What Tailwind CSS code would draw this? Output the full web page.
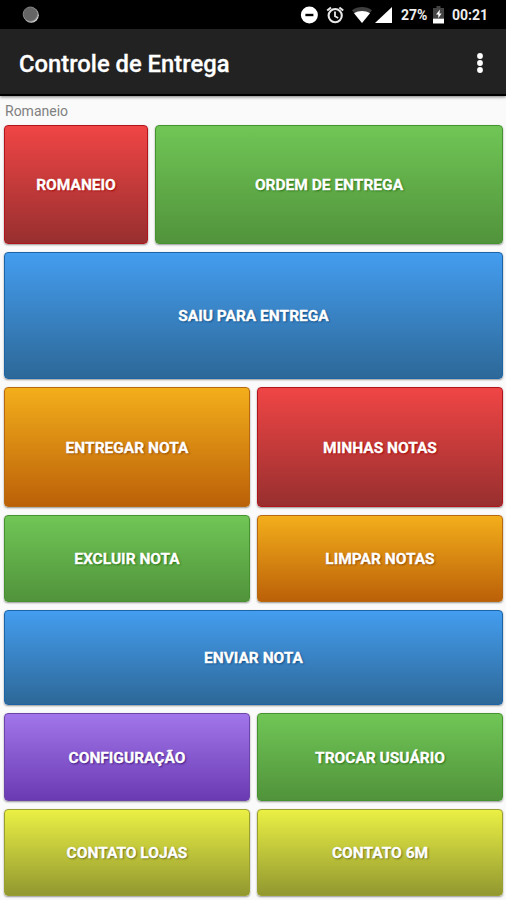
<!DOCTYPE html>
<html lang="pt-BR">
<head>
  <meta charset="UTF-8">
  <meta name="viewport" content="width=device-width, initial-scale=1.0">
  <title>Controle de Entrega</title>
  <script src="https://cdn.jsdelivr.net/npm/@tailwindcss/browser@4"></script>
  <style>
    .btn {
      border-width: 1px;
      border-radius: 4px;
      padding-top: 3px;
      color: #fff;
      font-weight: 700;
      font-size: 15.5px;
      -webkit-text-stroke: 0.3px #fff;
      white-space: nowrap;
      box-shadow: 0 1px 2px rgba(0, 0, 0, 0.4);
    }
    .btn-red { background: linear-gradient(#f04545, #982f2f); border-color: #b3141c; text-shadow: 1px 1px 2px #a00000; }
    .btn-green { background: linear-gradient(#70c656, #51933b); border-color: #45932f; text-shadow: 1px 1px 2px #1f6b10; }
    .btn-blue { background: linear-gradient(#449def, #2d6898); border-color: #1b64a5; text-shadow: 1px 1px 2px #0b4880; }
    .btn-orange { background: linear-gradient(#f3ae1b, #bb6008); border-color: #b8690f; text-shadow: 1px 1px 2px #8a4300; }
    .btn-purple { background: linear-gradient(#a276eb, #6a3ab2); border-color: #6c45ab; text-shadow: 1px 1px 2px #38107a; }
    .btn-yellow { background: linear-gradient(#eaf044, #92982f); border-color: #9a9f30; text-shadow: 1px 1px 2px #66691a; }
  </style>
</head>
<body class="w-[506px] h-[900px] overflow-hidden bg-[#fafafa] font-['Roboto',sans-serif]">
  <!-- Status bar -->
  <div class="h-[29px] bg-black flex items-center justify-between pl-[22px] pr-[18px] text-[#eee]">
    <svg class="w-[18px] h-[18px]" viewBox="0 0 18 18">
      <circle cx="9.2" cy="9.2" r="7.6" fill="#d4d4d4"/>
      <circle cx="8.4" cy="8.2" r="7" fill="#656565"/>
      <circle cx="8.4" cy="8.2" r="7.2" fill="none" stroke="#858585" stroke-width="1"/>
    </svg>
    <div class="flex items-center">
      <svg class="w-[18px] h-[18px]" viewBox="0 0 18 18">
        <circle cx="9.4" cy="9" r="8.5" fill="#fff"/>
        <rect x="5.4" y="7.8" width="8" height="2.4" fill="#000"/>
      </svg>
      <svg class="w-[18px] h-[18px] ml-[8px]" viewBox="0 0 18 18" fill="none" stroke="#e8e8e8">
        <circle cx="9.2" cy="9.6" r="6.6" stroke-width="2.1"/>
        <path d="M1.2 4.6 5 1.4M17.2 4.6 13.4 1.4" stroke-width="2"/>
        <path d="M9 5.6v4.6l3.2 1.8" stroke-width="1.8"/>
      </svg>
      <svg class="w-[20px] h-[16px] ml-[8px]" viewBox="0 0 20 16">
        <path d="M0 3.2C6-1 14-1 20 3.2L10 16Z" fill="#3f3f3f"/>
        <path d="M2 6.3C7 3.2 13 3.2 18 6.3L10 16Z" fill="#fff"/>
      </svg>
      <svg class="w-[17px] h-[16px] ml-[3px]" viewBox="0 0 17 16">
        <path d="M17 0V16H0Z" fill="#fff"/>
      </svg>
      <span class="ml-[9px] w-[28px] pt-[2px] text-[14px] font-bold whitespace-nowrap">27%</span>
      <svg class="w-[11px] h-[18px] ml-[4px]" viewBox="0 0 11 18">
        <path d="M3.5 0h4v2H11v10H0V2h3.5Z" fill="#444"/>
        <path d="M0 12.5h11v5H0Z" fill="#fff"/>
        <path d="M7 3.5 3 8.6h2.3v3.7L8.6 7.6H6.4Z" fill="#fff"/>
      </svg>
      <span class="ml-[8px] w-[36px] pt-[2px] text-[14px] font-bold whitespace-nowrap">00:21</span>
    </div>
  </div>

  <!-- App bar -->
  <header class="h-[67px] bg-[#222] border-b-2 border-black shadow-[0_1px_3px_rgba(0,0,0,0.5)] flex items-center justify-between pl-[19px] pr-[22px]">
    <h1 class="text-white text-[23.8px] font-medium pt-[7px] whitespace-nowrap [-webkit-text-stroke:0.3px_#fff]">Controle de Entrega</h1>
    <svg class="w-[8px] h-[22px] mt-[2px]" viewBox="0 0 8 22" fill="#fff">
      <circle cx="4" cy="4" r="2.9"/>
      <circle cx="4" cy="11" r="2.9"/>
      <circle cx="4" cy="18" r="2.9"/>
    </svg>
  </header>

  <main class="pl-1 pr-[3px]">
    <p class="h-[29px] pt-[6px] pl-px text-[14px] leading-[18px] text-[#808080]">Romaneio</p>
    <div class="grid grid-cols-2 grid-rows-[119px_127px_119.5px_87.5px_95px_87.5px_87.5px] gap-x-[7px] gap-y-[8px]">
      <div class="col-span-2 flex gap-[7px]">
        <button class="btn btn-red w-[144px]">ROMANEIO</button>
        <button class="btn btn-green flex-1">ORDEM DE ENTREGA</button>
      </div>
      <button class="btn btn-blue col-span-2">SAIU PARA ENTREGA</button>
      <button class="btn btn-orange">ENTREGAR NOTA</button>
      <button class="btn btn-red">MINHAS NOTAS</button>
      <button class="btn btn-green">EXCLUIR NOTA</button>
      <button class="btn btn-orange">LIMPAR NOTAS</button>
      <button class="btn btn-blue col-span-2">ENVIAR NOTA</button>
      <button class="btn btn-purple">CONFIGURAÇÃO</button>
      <button class="btn btn-green">TROCAR USUÁRIO</button>
      <button class="btn btn-yellow">CONTATO LOJAS</button>
      <button class="btn btn-yellow">CONTATO 6M</button>
    </div>
  </main>
</body>
</html>
